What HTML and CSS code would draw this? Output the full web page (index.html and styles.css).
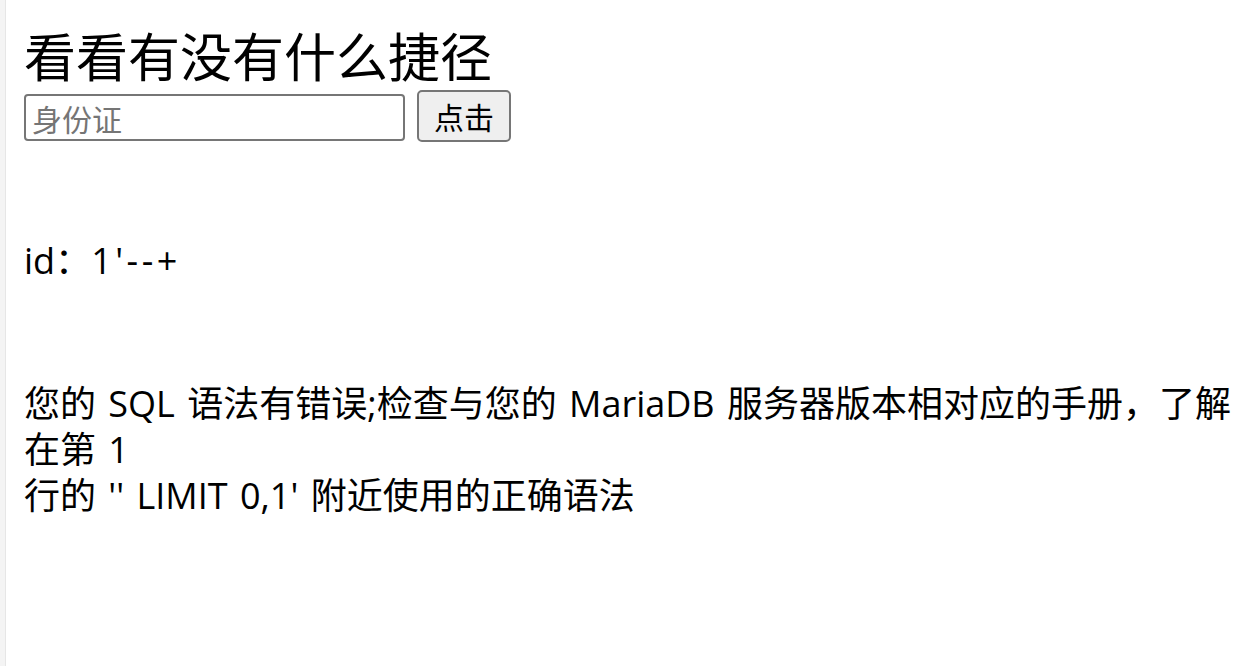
FILE: index.html
```html
<!DOCTYPE html>
<html lang="zh-CN">
<head>
<meta charset="utf-8">
<title>看看有没有什么捷径</title>
<link rel="stylesheet" href="styles.css">
</head>
<body>
<div class="page">
  <h1 class="title">看看有没有什么捷径</h1>
  <form class="search">
    <input class="field" type="text" placeholder="身份证">
    <button class="btn" type="button">点击</button>
  </form>
  <p class="id-line">id：<span class="id-value">1'--+</span></p>
  <p class="error">
    <span class="line">您的 SQL 语法有错误;检查与您的 MariaDB 服务器版本相对应的手册，了解</span>
    <span class="line">在第 1</span>
    <span class="line">行的 '' LIMIT 0,1' 附近使用的正确语法</span>
  </p>
</div>
</body>
</html>
```

FILE: styles.css
```css
html, body {
  margin: 0;
  padding: 0;
  background: #ffffff;
}

body {
  font-family: "Open Sans", "Noto Sans CJK SC", sans-serif;
  color: #000000;
}

.page {
  min-height: 666px;
  box-sizing: border-box;
  border-left: 5px solid #f4f4f4;
  box-shadow: inset 1px 0 0 #e6e6e6;
  padding: 25px 18px 0 19px;
}

.title {
  margin: 0;
  font-family: "Noto Sans CJK SC", sans-serif;
  font-size: 52px;
  font-weight: 400;
  line-height: 60px;
  letter-spacing: 0;
}

.search {
  display: flex;
  align-items: flex-start;
  gap: 12px;
  margin-top: 5px;
}

.field {
  box-sizing: border-box;
  width: 381px;
  height: 47px;
  margin: 4px 0 0 0;
  padding: 0 6px;
  border: 2px solid #767676;
  border-radius: 4px;
  font-family: "Noto Sans CJK SC", sans-serif;
  font-size: 30px;
  color: #000;
  background: #fff;
}

.field::placeholder {
  color: #757575;
}

.btn {
  box-sizing: border-box;
  width: 94px;
  height: 52px;
  margin: 0;
  padding: 0;
  border: 2px solid #767676;
  border-radius: 5px;
  background: #efefef;
  font-family: "Noto Sans CJK SC", sans-serif;
  font-size: 30px;
  color: #000;
}

.id-line {
  margin: 96px 0 0 0;
  font-size: 36px;
  line-height: 46px;
}

.id-value {
  letter-spacing: 3.5px;
}

.error {
  margin: 97px 0 0 0;
  font-size: 36px;
  line-height: 46px;
  word-spacing: 3px;
}

.line {
  display: block;
  white-space: nowrap;
}
```
